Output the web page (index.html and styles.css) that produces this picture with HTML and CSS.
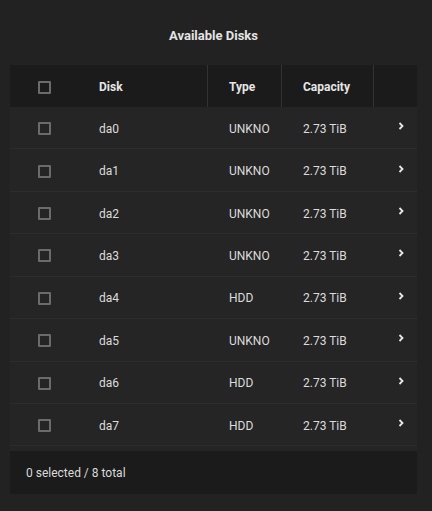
FILE: index.html
```html
<!DOCTYPE html>
<html>
<head>
<meta charset="utf-8">
<link rel="stylesheet" href="styles.css">
</head>
<body>
<div class="page">
  <h1 class="title">Available Disks</h1>
  <div class="table">
    <div class="row head">
      <div class="cell check"><span class="box"></span></div>
      <div class="cell name div">Disk</div>
      <div class="cell div">Type</div>
      <div class="cell div">Capacity</div>
      <div class="cell"></div>
    </div>
    <div class="row"><div class="cell check"><span class="box"></span></div><div class="cell name">da0</div><div class="cell">UNKNO</div><div class="cell">2.73 TiB</div><div class="cell chev"><svg width="6" height="8" viewBox="0 0 6 8"><polyline points="1.5,1 4.5,4 1.5,7" fill="none" stroke="#e8e8e8" stroke-width="1.8"/></svg></div></div>
    <div class="row"><div class="cell check"><span class="box"></span></div><div class="cell name">da1</div><div class="cell">UNKNO</div><div class="cell">2.73 TiB</div><div class="cell chev"><svg width="6" height="8" viewBox="0 0 6 8"><polyline points="1.5,1 4.5,4 1.5,7" fill="none" stroke="#e8e8e8" stroke-width="1.8"/></svg></div></div>
    <div class="row"><div class="cell check"><span class="box"></span></div><div class="cell name">da2</div><div class="cell">UNKNO</div><div class="cell">2.73 TiB</div><div class="cell chev"><svg width="6" height="8" viewBox="0 0 6 8"><polyline points="1.5,1 4.5,4 1.5,7" fill="none" stroke="#e8e8e8" stroke-width="1.8"/></svg></div></div>
    <div class="row"><div class="cell check"><span class="box"></span></div><div class="cell name">da3</div><div class="cell">UNKNO</div><div class="cell">2.73 TiB</div><div class="cell chev"><svg width="6" height="8" viewBox="0 0 6 8"><polyline points="1.5,1 4.5,4 1.5,7" fill="none" stroke="#e8e8e8" stroke-width="1.8"/></svg></div></div>
    <div class="row"><div class="cell check"><span class="box"></span></div><div class="cell name">da4</div><div class="cell">HDD</div><div class="cell">2.73 TiB</div><div class="cell chev"><svg width="6" height="8" viewBox="0 0 6 8"><polyline points="1.5,1 4.5,4 1.5,7" fill="none" stroke="#e8e8e8" stroke-width="1.8"/></svg></div></div>
    <div class="row"><div class="cell check"><span class="box"></span></div><div class="cell name">da5</div><div class="cell">UNKNO</div><div class="cell">2.73 TiB</div><div class="cell chev"><svg width="6" height="8" viewBox="0 0 6 8"><polyline points="1.5,1 4.5,4 1.5,7" fill="none" stroke="#e8e8e8" stroke-width="1.8"/></svg></div></div>
    <div class="row"><div class="cell check"><span class="box"></span></div><div class="cell name">da6</div><div class="cell">HDD</div><div class="cell">2.73 TiB</div><div class="cell chev"><svg width="6" height="8" viewBox="0 0 6 8"><polyline points="1.5,1 4.5,4 1.5,7" fill="none" stroke="#e8e8e8" stroke-width="1.8"/></svg></div></div>
    <div class="row"><div class="cell check"><span class="box"></span></div><div class="cell name">da7</div><div class="cell">HDD</div><div class="cell">2.73 TiB</div><div class="cell chev"><svg width="6" height="8" viewBox="0 0 6 8"><polyline points="1.5,1 4.5,4 1.5,7" fill="none" stroke="#e8e8e8" stroke-width="1.8"/></svg></div></div>
    <div class="footer">0 selected / 8 total</div>
  </div>
</div>
</body>
</html>
```
FILE: styles.css
```css
html, body {
  margin: 0;
  padding: 0;
  background: #222222;
  font-family: Roboto, "Liberation Sans", sans-serif;
  color: #dcdcdc;
}
.page {
  width: 432px;
  height: 511px;
  box-sizing: border-box;
  padding: 0 15px 0 10px;
}
.title {
  margin: 0;
  height: 65px;
  box-sizing: border-box;
  padding-top: 27px;
  font-size: 13px;
  font-weight: 700;
  line-height: 17px;
  text-align: center;
  color: #e4e4e4;
}
.table {
  background: #252525;
}
.row {
  display: grid;
  grid-template-columns: 68px 130px 74px 92px 43px;
  height: 42.43px;
  box-sizing: border-box;
  border-bottom: 1px solid #2d2d2d;
  align-items: center;
  font-size: 12px;
}
.row .cell {
  padding-top: 2px;
}
.row.head {
  height: 42px;
  background: #1b1b1b;
  border-bottom: none;
  font-weight: 700;
  color: #e6e6e6;
  align-items: stretch;
}
.cell {
  padding-left: 21px;
  height: 100%;
  display: flex;
  align-items: center;
  box-sizing: border-box;
}
.cell.div {
  border-right: 1px solid #333333;
}
.cell.check {
  padding-left: 0;
  justify-content: center;
}
.box {
  display: block;
  width: 13px;
  height: 13px;
  box-sizing: border-box;
  border: 2px solid #6b6b6b;
  border-radius: 1px;
}
.cell.chev {
  padding-left: 24px;
  padding-bottom: 5px;
}
.chev svg {
  display: block;
}
.footer {
  margin-top: 5px;
  height: 43px;
  box-sizing: border-box;
  padding-top: 2px;
  background: #1b1b1b;
  font-size: 12px;
  line-height: 41px;
  padding-left: 16px;
  color: #dadada;
}
```
